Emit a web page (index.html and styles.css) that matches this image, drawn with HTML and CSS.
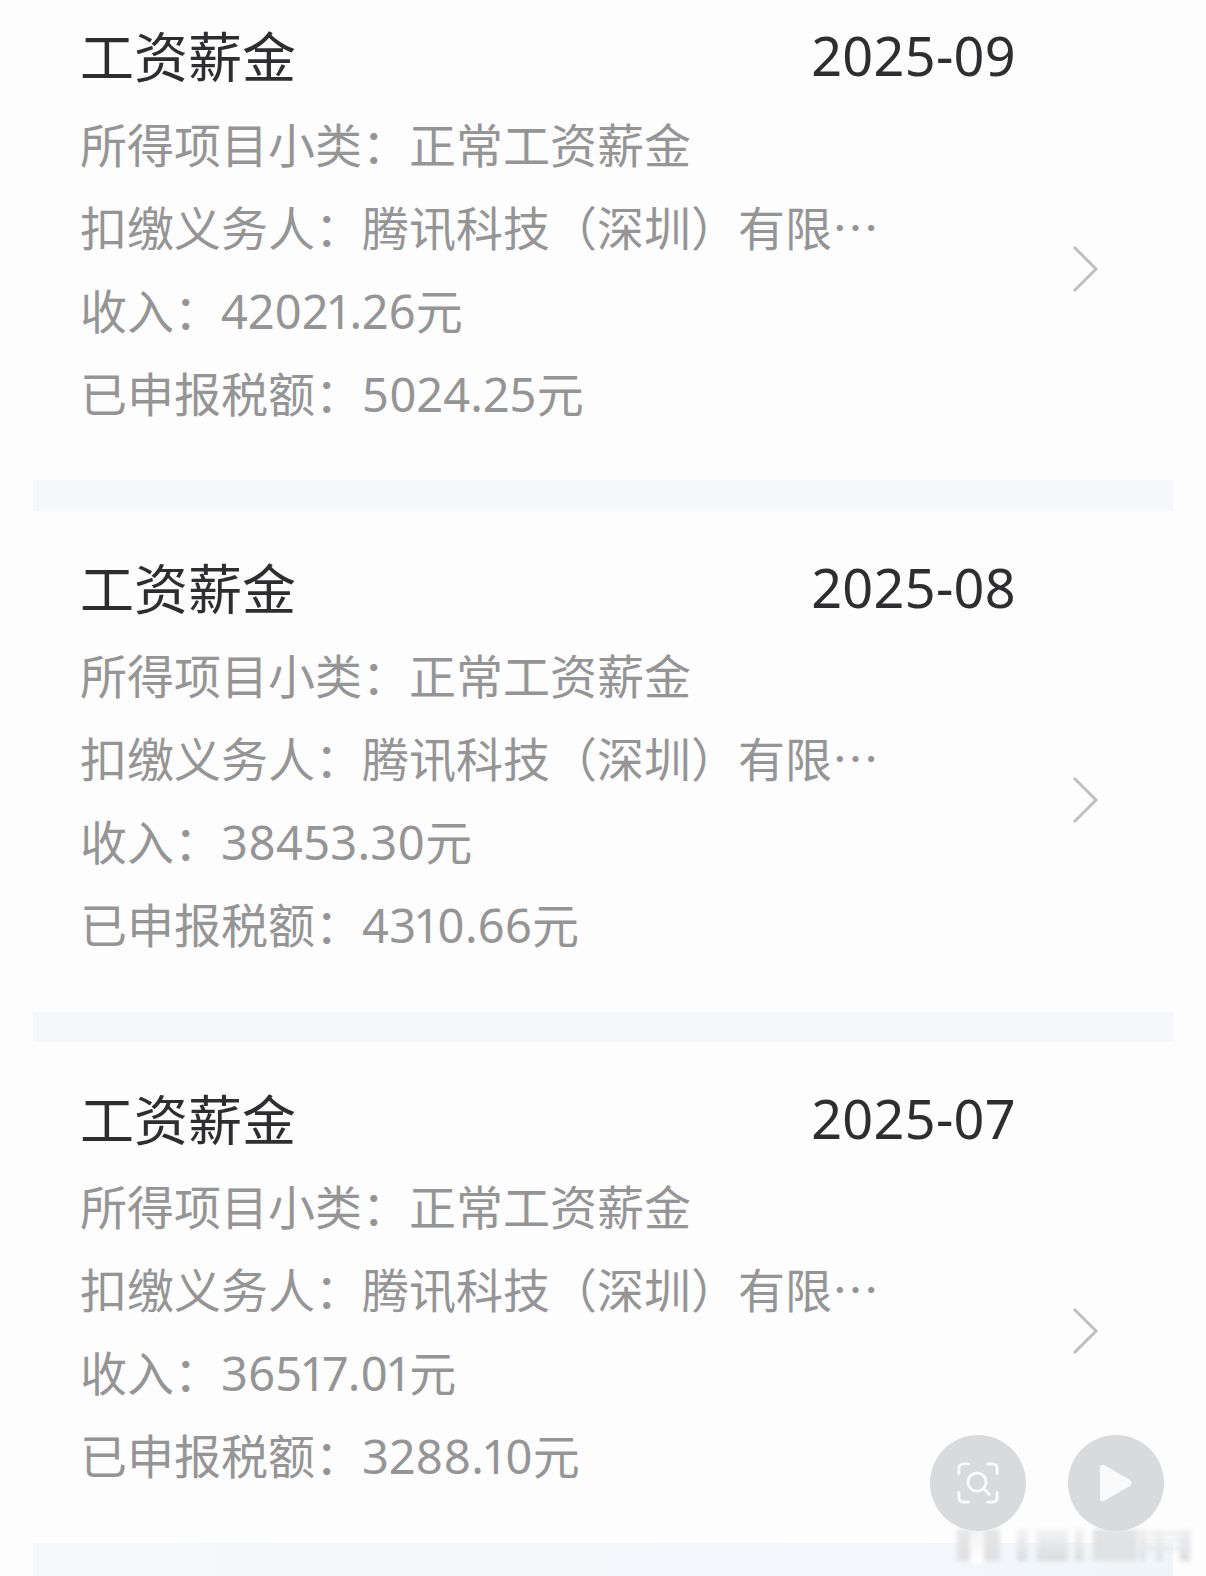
FILE: index.html
```html
<!DOCTYPE html>
<html lang="zh-CN">
<head>
<meta charset="utf-8">
<title>收入纳税明细</title>
<link rel="stylesheet" href="styles.css">
</head>
<body>
<main class="page">
  <section class="card card-first">
    <div class="head"><h2 class="title">工资薪金</h2><span class="date">2025-09</span></div>
    <div class="body">
      <div class="lines">
        <p class="line">所得项目小类：正常工资薪金</p>
        <p class="line">扣缴义务人：腾讯科技（深圳）有限…</p>
        <p class="line">收入：<span class="num">42021.26</span>元</p>
        <p class="line">已申报税额：<span class="num">5024.25</span>元</p>
      </div>
      <svg class="chevron" viewBox="0 0 28 48"><path d="M3 2 L25 24 L3 46"/></svg>
    </div>
  </section>
  <div class="band"></div>
  <section class="card">
    <div class="head"><h2 class="title">工资薪金</h2><span class="date">2025-08</span></div>
    <div class="body">
      <div class="lines">
        <p class="line">所得项目小类：正常工资薪金</p>
        <p class="line">扣缴义务人：腾讯科技（深圳）有限…</p>
        <p class="line">收入：<span class="num">38453.30</span>元</p>
        <p class="line">已申报税额：<span class="num">4310.66</span>元</p>
      </div>
      <svg class="chevron" viewBox="0 0 28 48"><path d="M3 2 L25 24 L3 46"/></svg>
    </div>
  </section>
  <div class="band band-mid"></div>
  <section class="card">
    <div class="head"><h2 class="title">工资薪金</h2><span class="date">2025-07</span></div>
    <div class="body">
      <div class="lines">
        <p class="line">所得项目小类：正常工资薪金</p>
        <p class="line">扣缴义务人：腾讯科技（深圳）有限…</p>
        <p class="line">收入：<span class="num">36517.01</span>元</p>
        <p class="line">已申报税额：<span class="num">3288.10</span>元</p>
      </div>
      <svg class="chevron" viewBox="0 0 28 48"><path d="M3 2 L25 24 L3 46"/></svg>
    </div>
  </section>
  <div class="band band-last"></div>
</main>
<div class="watermark">
  <i class="wm-a"></i><i class="wm-b"></i><i class="wm-c"></i><i class="wm-d"></i><i class="wm-e"></i><i class="wm-f"></i><i class="wm-g"></i><i class="wm-h"></i><i class="wm-i"></i><i class="wm-j"></i><i class="wm-k"></i><i class="wm-l"></i>
</div>
<div class="fab fab-scan">
  <svg viewBox="0 0 44 44" class="fab-icon">
    <path d="M2 12 V7 Q2 2 7 2 H12 M32 2 H37 Q42 2 42 7 V12 M42 32 V37 Q42 42 37 42 H32 M12 42 H7 Q2 42 2 37 V32"/>
    <circle cx="21" cy="21" r="9.5"/>
    <path d="M28 28 L34 34"/>
  </svg>
</div>
<div class="fab fab-play">
  <svg viewBox="0 0 34 38" class="fab-icon-solid"><path d="M1 4 Q1 0 5 1 L31 16 Q34 19 31 22 L5 37 Q1 38 1 34 Z"/></svg>
</div>
</body>
</html>
```

FILE: styles.css
```css
* { box-sizing: border-box; }
html, body { margin: 0; padding: 0; }
body {
  width: 1206px;
  height: 1576px;
  overflow: hidden;
  background: #fdfdfe;
  font-family: "Noto Sans", "Noto Sans CJK SC", sans-serif;
  position: relative;
}
.page { display: flex; flex-direction: column; }
.card { height: 501px; padding: 41px 0 0 80px; display: flex; flex-direction: column; }
.card-first { height: 480px; padding-top: 20px; }
.head {
  width: 936px;
  height: 70px;
  display: flex;
  justify-content: space-between;
  align-items: center;
}
.title, .date { margin: 0; font-size: 54px; font-weight: 400; color: #2e2e30; line-height: 70px; }
.title { font-family: "Noto Sans CJK SC", sans-serif; }
.date { letter-spacing: 0.3px; }
.body { display: flex; align-items: center; }
.lines { width: 991px; padding-top: 10px; }
.card-first .lines { padding-top: 11px; }
.line {
  margin: 0;
  height: 83px;
  line-height: 83px;
  font-size: 47px;
  color: #959595;
  font-weight: 400;
  white-space: nowrap;
  font-family: "Noto Sans CJK SC", sans-serif;
}
.num { font-family: "Noto Sans", sans-serif; font-weight: 400; font-variant-numeric: proportional-nums; letter-spacing: 0.25px; }
.chevron { width: 28px; height: 48px; margin-top: 14px; fill: none; stroke: #c0c0c0; stroke-width: 3px; }
.band { height: 31px; margin: 0 33px; background: #f5f7fb; }
.band-mid { height: 30px; }
.band-last { height: 40px; background: linear-gradient(90deg, #f6f8fb, #f4f7fb 75%, #eff5f9); }
.fab {
  position: absolute;
  top: 1435px;
  width: 96px;
  height: 96px;
  border-radius: 50%;
  background: #d9dadb;
  display: flex;
  align-items: center;
  justify-content: center;
}
.fab-scan { left: 930px; }
.fab-play { left: 1068px; }
.fab-icon { width: 42px; height: 42px; fill: none; stroke: #fafafa; stroke-width: 3px; stroke-linecap: round; }
.fab-icon-solid { width: 34px; height: 38px; fill: #fafafa; }
.watermark { position: absolute; left: 957px; top: 1527px; width: 240px; height: 38px; filter: blur(2px); }
.watermark i { position: absolute; top: 2px; height: 32px; background: linear-gradient(#f3f3f4, #dadcde); }
.watermark .wm-a { left: 0; width: 43px; background: linear-gradient(#e6e6e7, #dfe0e1); }
.watermark .wm-b { left: 13px; width: 14px; top: 3px; height: 33px; background: linear-gradient(#f2f2f2, #ffffff); }
.watermark .wm-c { left: 60px; width: 10px; }
.watermark .wm-d { left: 80px; width: 31px; }
.watermark .wm-e { left: 118px; width: 8px; }
.watermark .wm-f { left: 136px; width: 44px; background: linear-gradient(#e3e3e4, #e0e2e3); }
.watermark .wm-g { left: 183px; width: 5px; }
.watermark .wm-h { left: 200px; width: 5px; }
.watermark .wm-i { left: 223px; width: 10px; }
.watermark .wm-j { left: 180px; width: 54px; top: 5px; height: 3px; background: #e6e7e8; }
.watermark .wm-k { left: 180px; width: 54px; top: 12px; height: 3px; background: #e6e7e8; }
.watermark .wm-l { left: 180px; width: 54px; top: 20px; height: 3px; background: #e6e7e8; }
```
